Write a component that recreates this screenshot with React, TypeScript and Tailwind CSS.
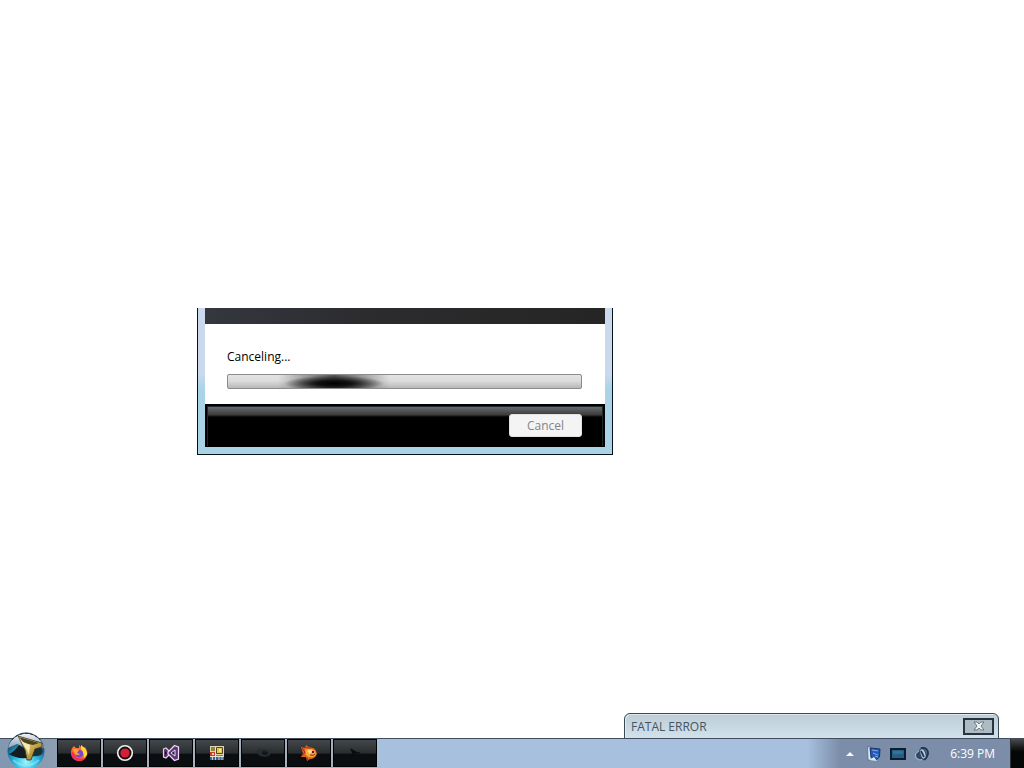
import type { ReactNode } from 'react';

function StartOrb() {
  return (
    <svg viewBox="0 0 40 37" className="h-[37px] w-10" aria-hidden="true">
      <defs>
        <radialGradient id="orb" cx="50%" cy="80%" r="60%">
          <stop offset="0" stopColor="#a4f2fb" />
          <stop offset=".4" stopColor="#3cc8ea" />
          <stop offset=".8" stopColor="#1a86b4" />
          <stop offset="1" stopColor="#1b5770" />
        </radialGradient>
        <linearGradient id="cap" x1="0" y1="0" x2="0" y2="1">
          <stop offset="0" stopColor="#f0f3f7" />
          <stop offset="1" stopColor="#8fa0b8" />
        </linearGradient>
        <linearGradient id="pointer" x1="0" y1="0" x2="1" y2="1">
          <stop offset="0" stopColor="#f3e8b0" />
          <stop offset=".5" stopColor="#d0b04c" />
          <stop offset="1" stopColor="#80651f" />
        </linearGradient>
      </defs>
      <circle cx="19" cy="20" r="18.5" fill="url(#orb)" />
      <path d="M1 17A18.5 18.5 0 0 1 37 17L28 14 20 17 10 13Z" fill="url(#cap)" />
      <path d="M2 23Q7 21 12 14L20 19 20 27Q9 28 2 23Z" fill="#141d22" />
      <path d="M27 17L33 16Q38 20 34 24Q29 26 24 25Z" fill="#1c303a" />
      <path d="M5 9A18 18 0 0 1 33 9" fill="none" stroke="#23282e" strokeWidth="1" strokeDasharray="3 2" />
      <path d="M11 5L35 12 35 16 28 18 24 29 20 29 18 19Z" fill="url(#pointer)" stroke="#373020" strokeWidth=".8" />
      <path d="M12 6L32 12 26 14 17 12Z" fill="#4a4126" />
      <path d="M14 10L23 14 22 24 20 19Z" fill="#f5eab5" />
      <path d="M6 29Q19 40 32 29" fill="none" stroke="#9ceff5" strokeWidth="2" opacity=".5" />
    </svg>
  );
}

function Firefox() {
  return (
    <svg viewBox="0 0 18 18" className="size-[18px]" aria-hidden="true">
      <path d="M2 4L4 2 6 4 9 4 9 1 12 4 15 3Q18 7 17 11Q15 17 9 17Q2 16 1 10Q1 6 2 4Z" fill="#ff6a2b" />
      <path d="M11 1Q18 6 17 11L14 14Q14 8 11 5Z" fill="#ffd83f" />
      <path d="M1 9Q2 17 9 17Q14 17 16 13Q11 16 6 13L3 8Z" fill="#f52d5b" />
      <circle cx="9.3" cy="9.7" r="3.8" fill="#7848cf" />
      <path d="M3 5Q6 4 9 6L7 9 10 10Q8 12 5 10Z" fill="#ffa436" />
    </svg>
  );
}

function Recorder() {
  return (
    <svg viewBox="0 0 18 18" className="size-[18px]" aria-hidden="true">
      <circle cx="9" cy="9" r="7.3" fill="#171114" stroke="#f3eff0" strokeWidth="1.6" />
      <circle cx="9" cy="9" r="4.6" fill="#d51f33" />
    </svg>
  );
}

function VisualStudio() {
  return (
    <svg viewBox="0 0 18 18" className="size-[18px]" aria-hidden="true">
      <path d="M1.5 5L4 4 12 12V6L4 14 1.5 13Z" fill="#57316f" stroke="#e4cdee" strokeWidth="1.2" />
      <path d="M12.5 1.5L16.5 3V15L12.5 16.5 6 10V8Z" fill="#60367a" stroke="#efdcf7" strokeWidth="1.2" />
      <path d="M13 6V12L9 9Z" fill="#241b2c" stroke="#efdcf7" strokeWidth="1" />
      <path d="M3 7V11L5 9Z" fill="#17121c" />
    </svg>
  );
}

function FormDesigner() {
  return (
    <svg viewBox="0 0 18 18" className="size-[18px]" aria-hidden="true">
      <path d="M2 2H16V16H2Z" fill="#d9d5b5" />
      <path d="M3 3H7V7H3Z" fill="#8d8341" />
      <path d="M8.5 3.5H14.5V9.5H8.5Z" fill="#e9c547" stroke="#4f4627" />
      <path d="M11 5H13V8H11Z" fill="#f8e27a" />
      <path d="M2 8H7V12H2Z" fill="#c5402f" />
      <path d="M4 9H6V11H4Z" fill="#f0cbb0" />
      <path d="M8 11H15V12H8Z" fill="#7b7a6c" />
      <path d="M2 13H16V16H2Z" fill="#3a62a0" />
      <path d="M4.5 13V16M7.5 3V16M11 13V16M14 13V16M2 12.5H16" stroke="#eee9d1" strokeWidth=".8" />
    </svg>
  );
}

function Fish() {
  return (
    <svg viewBox="0 0 18 18" className="size-[18px]" aria-hidden="true">
      <path d="M1 3L5 4 6 1 9 3 13 4Q16 5 17 10Q15 15 10 15L7 17 6 13 1 13 3 9Z" fill="#e2641b" />
      <path d="M5 6Q9 3 14 6Q17 9 15 12Q10 15 6 11Z" fill="#f9aa3d" />
      <path d="M7 7Q10 5 12 7L10 10Z" fill="#ffdd86" />
      <path d="M2 4L5 8 2 12M6 3L8 4 11 4M7 14L8 16" stroke="#a5281a" fill="none" />
      <path d="M12 7H14V9H12Z" fill="#43200f" />
      <path d="M10 11Q14 12 15 10" stroke="#6d2912" fill="none" />
    </svg>
  );
}

function DimDisc() {
  return (
    <svg viewBox="0 0 18 18" className="size-[18px]" aria-hidden="true">
      <path d="M2 8Q5 4 11 5Q17 7 16 11Q13 14 6 12Z" fill="#252d30" />
      <path d="M9 7Q14 7 14 10Q12 12 8 10Z" fill="#11171a" />
    </svg>
  );
}

function DimArrow() {
  return (
    <svg viewBox="0 0 18 18" className="size-[18px]" aria-hidden="true">
      <path d="M4 4L15 9 8 10 5 14 6 9Z" fill="#0a0b0b" />
      <path d="M5 4L12 8" stroke="#333839" />
    </svg>
  );
}

const apps: { name: string; icon: ReactNode }[] = [
  { name: 'Firefox', icon: <Firefox /> },
  { name: 'Screen recorder', icon: <Recorder /> },
  { name: 'Visual Studio', icon: <VisualStudio /> },
  { name: 'Form designer', icon: <FormDesigner /> },
  { name: 'Media tool', icon: <DimDisc /> },
  { name: 'Goldfish', icon: <Fish /> },
  { name: 'Pointer', icon: <DimArrow /> },
];

function CancelDialog() {
  return (
    <section
      aria-label="Canceling"
      className="absolute left-[197px] top-[308px] w-[416px] border border-t-0 border-[#06121a] bg-linear-to-b from-[#cbd9ed] from-45% to-[#abd3e8] to-55% px-[7px] pb-[7px]"
    >
      <div className="h-4 bg-linear-to-r from-[#34373e] via-[#2c2c2f] via-40% to-[#252525]" />
      <div className="bg-white px-[22px] pb-[15px] pt-6 text-xs leading-[18px]">
        <p>Canceling...</p>
        <div
          role="progressbar"
          aria-label="Canceling"
          className="mt-2 mr-px h-[15px] overflow-hidden rounded-xs border border-[#8c8c8c] bg-linear-to-b from-[#e4e4e4] via-[#dcdcdc] via-45% to-[#b8b8b8]"
        >
          <div className="ml-[50px] h-full w-[112px] bg-linear-to-r from-transparent via-[#555555] to-transparent">
            <div className="h-full bg-[radial-gradient(ellipse_50px_8px_at_50%_65%,#000000_0%,#111111_35%,transparent_100%)]" />
          </div>
        </div>
      </div>
      <div className="flex h-[43px] justify-end border border-black bg-black p-px pb-0">
        <div className="flex flex-1 justify-end border border-b-0 border-[#17292c] bg-linear-to-b from-[#6a6a6a] from-0% via-[#3c3c3c] via-20% to-black to-28% pr-[20px] pt-[7px]">
          <button
            disabled
            className="h-[23px] w-[73px] rounded-[3px] border border-[#e2e2e2] bg-[#f4f4f4] text-xs text-[#858585]"
          >
            Cancel
          </button>
        </div>
      </div>
    </section>
  );
}

function ErrorWindow() {
  return (
    <section className="absolute bottom-[-1px] right-[25px] flex h-[26px] w-[375px] items-center justify-between rounded-t-md border border-[#3a4853] bg-linear-to-b from-[#bdcdd6] to-[#d2e2ec] pl-1.5 pr-1 text-xs text-[#455563] shadow-[inset_1px_1px_0_#e1ebef]">
      <h2 className="pt-0.5">FATAL ERROR</h2>
      <button
        aria-label="Close"
        className="flex h-[17px] w-[31px] items-center justify-center border-2 border-[#25343f] bg-[#adbbc5]"
      >
        <svg viewBox="0 0 12 10" className="h-2.5 w-3" aria-hidden="true">
          <path d="M1 1H4L6 3 8 1H11L8 5 11 9H8L6 7 4 9H1L4 5Z" fill="#edf2f4" stroke="#53616b" strokeWidth=".8" />
        </svg>
      </button>
    </section>
  );
}

function Tray() {
  return (
    <div className="flex w-[216px] items-stretch justify-end bg-linear-to-r from-[#a6c0dd] to-[#7b8da8] to-15%">
      <div className="flex items-center text-white">
        <button aria-label="Show hidden icons" className="mr-2.5 flex size-3 items-center justify-center">
          <svg viewBox="0 0 8 6" className="h-1.5 w-2" aria-hidden="true">
            <path d="M0 5L4 1 8 5Z" fill="#f5f8fc" />
          </svg>
        </button>
        <button aria-label="Display settings" className="mr-2">
          <svg viewBox="0 0 16 16" className="size-4" aria-hidden="true">
            <path d="M1.5 1H5V14H2Z" fill="#d9e5f0" stroke="#4c647c" strokeWidth=".7" />
            <path d="M4 2L14 3 13.5 11 10 14 5 11Z" fill="#2459b5" stroke="#183673" />
            <path d="M6 4L12 5M7 7L12 9M9 10L12 11" stroke="#7fa9e2" />
            <path d="M3 14L8 11 11 15Z" fill="#dce7f0" />
          </svg>
        </button>
        <button aria-label="Network" className="mr-2">
          <svg viewBox="0 0 16 16" className="size-4" aria-hidden="true">
            <path d="M1 3H15V13H1Z" fill="#245f88" stroke="#0f1c2c" strokeWidth="2" />
            <path d="M3 5H13V8H3Z" fill="#30749d" />
          </svg>
        </button>
        <button aria-label="Volume" className="mr-5">
          <svg viewBox="0 0 16 16" className="size-4" aria-hidden="true">
            <path d="M1.5 8L6 4 9 13 6 14 2 12Z" fill="#2e4967" stroke="#c7d5e2" strokeWidth=".8" />
            <ellipse cx="9" cy="8" rx="3" ry="5.6" transform="rotate(-18 9 8)" fill="#bccddc" stroke="#304b69" strokeWidth="1.4" />
            <path d="M7 2Q14 1 14 8Q13 12 10 14M7 5L10 11" fill="none" stroke="#1d3654" strokeWidth="1.8" />
          </svg>
        </button>
        <time className="mr-[15px] whitespace-nowrap text-xs">6:39 PM</time>
      </div>
      <button
        aria-label="Show desktop"
        className="w-3.5 border-l border-[#303336] bg-linear-to-b from-[#4a4c4e] to-[#050606] to-45%"
      />
    </div>
  );
}

export default function App() {
  return (
    <div className="flex min-h-screen flex-col overflow-hidden bg-white font-['Open_Sans','Noto_Sans',sans-serif] text-black">
      <main className="relative flex-1">
        <CancelDialog />
        <ErrorWindow />
      </main>
      <footer className="relative flex h-[30px] border-t border-[#414d5d] bg-[#a6c0dd]">
        <div className="flex w-[57px] items-end bg-linear-to-r from-[#8297b0] to-[#8d9db2] pl-[7px]">
          <button aria-label="Start">
            <StartOrb />
          </button>
        </div>
        <nav aria-label="Running applications" className="flex gap-0.5 bg-[#a5b0bc] pb-px">
          {apps.map((app) => (
            <button
              key={app.name}
              aria-label={app.name}
              className="flex w-11 items-center justify-center border border-black bg-linear-to-b from-[#45484b] via-[#2a2d30] via-50% to-[#0b0e11] to-55%"
            >
              {app.icon}
            </button>
          ))}
        </nav>
        <div className="flex-1" />
        <Tray />
      </footer>
    </div>
  );
}
